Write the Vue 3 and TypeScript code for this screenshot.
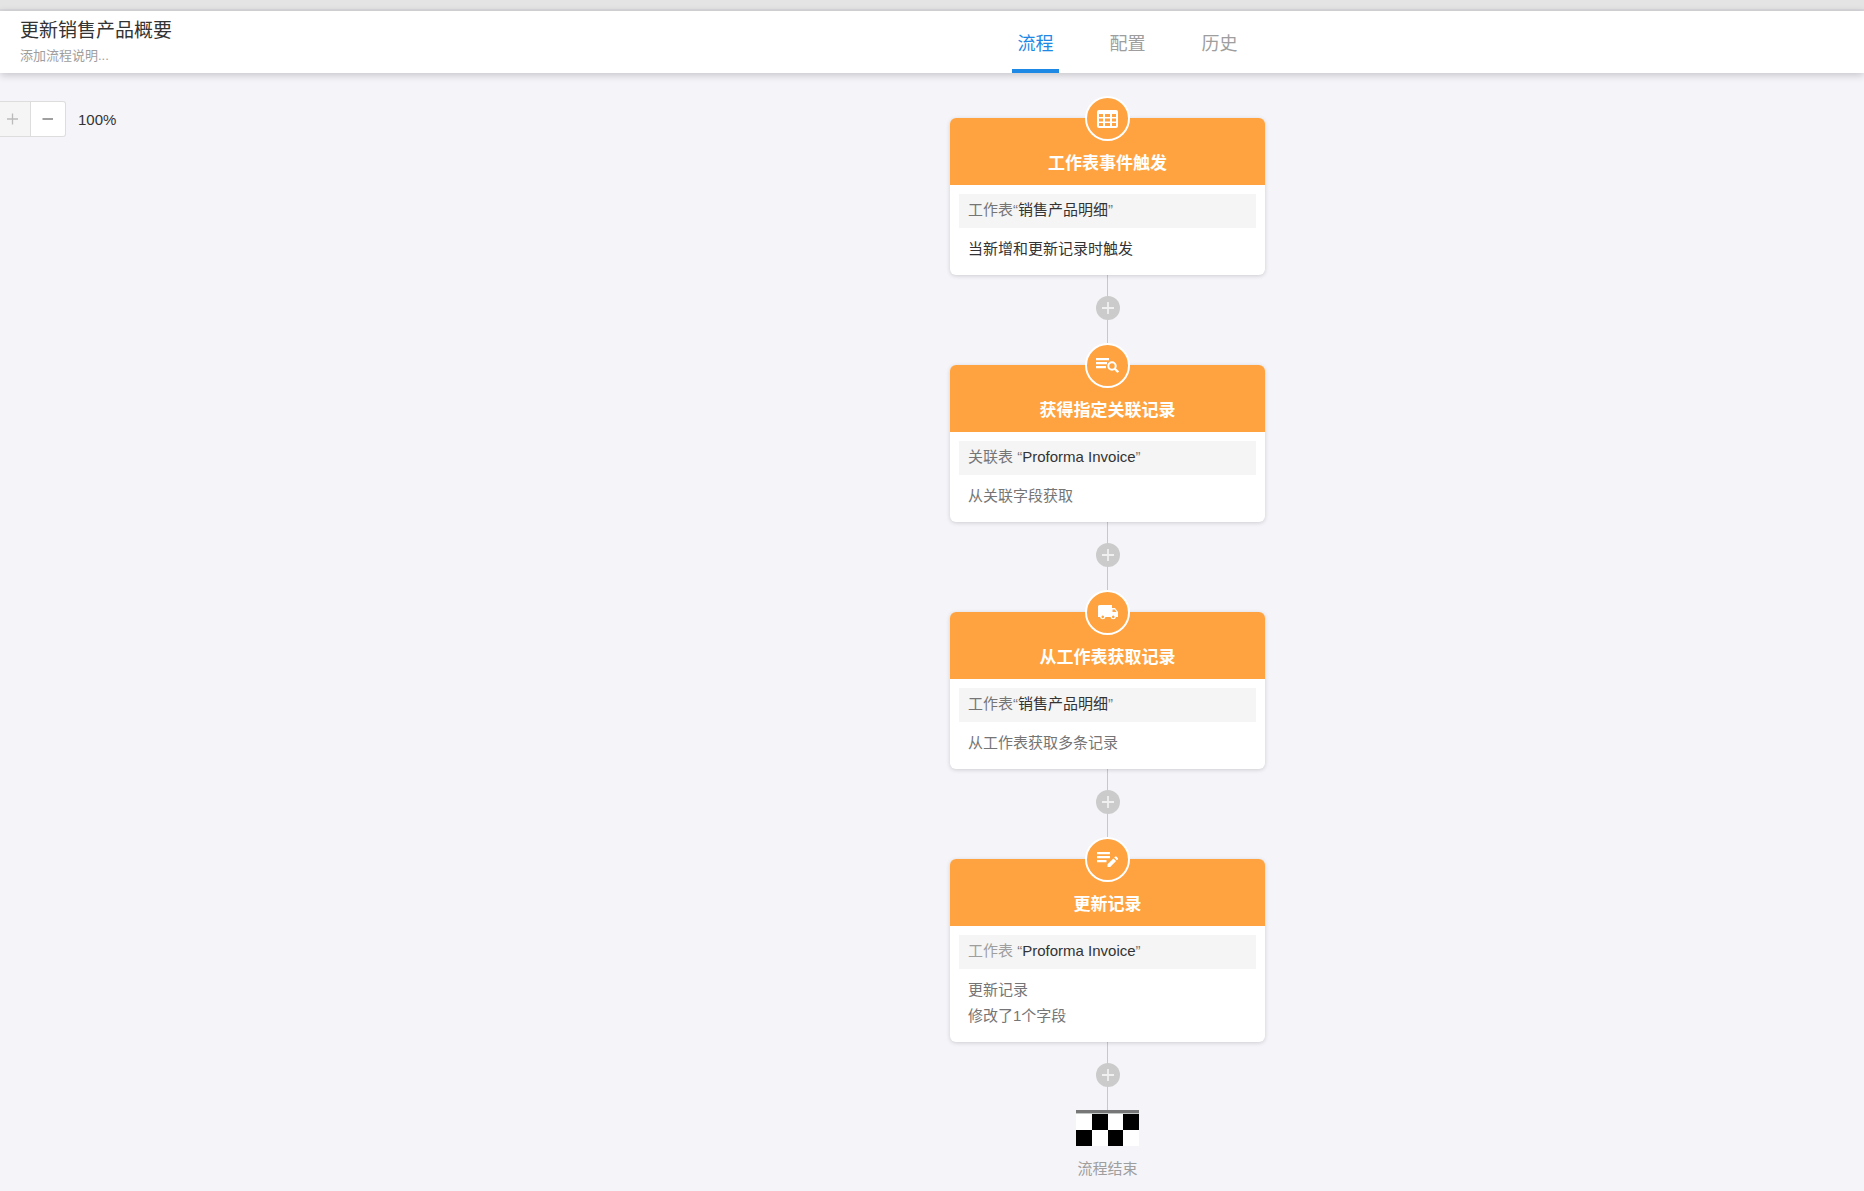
<script setup lang="ts">
import { ref } from 'vue'

type Icon = 'sheet' | 'search' | 'truck' | 'edit'

interface FlowNode {
  icon: Icon
  title: string
  label: string
  target: string
  spaced: boolean
  tone: 'mid' | 'light'
  lines: string[]
  dark?: boolean
}

const tabs = ['流程', '配置', '历史']
const active = ref(0)
const zoom = ref(100)

const nodes: FlowNode[] = [
  { icon: 'sheet', title: '工作表事件触发', label: '工作表', target: '销售产品明细', spaced: false, tone: 'mid', lines: ['当新增和更新记录时触发'], dark: true },
  { icon: 'search', title: '获得指定关联记录', label: '关联表', target: 'Proforma Invoice', spaced: true, tone: 'mid', lines: ['从关联字段获取'] },
  { icon: 'truck', title: '从工作表获取记录', label: '工作表', target: '销售产品明细', spaced: false, tone: 'mid', lines: ['从工作表获取多条记录'] },
  { icon: 'edit', title: '更新记录', label: '工作表', target: 'Proforma Invoice', spaced: true, tone: 'light', lines: ['更新记录', '修改了1个字段'] },
]
</script>

<template>
  <div class="page">
    <div class="strip"></div>
    <header class="header">
      <div class="heading">
        <h1>更新销售产品概要</h1>
        <button type="button" class="describe">添加流程说明...</button>
      </div>
      <nav class="tabs">
        <a
          v-for="(tab, i) in tabs"
          :key="tab"
          href="#"
          :class="{ active: i === active }"
          @click.prevent="active = i"
        >{{ tab }}</a>
      </nav>
    </header>

    <main class="canvas">
      <div class="zoom">
        <button type="button" class="plus" aria-label="放大" :disabled="zoom >= 100" @click="zoom += 10">
          <svg width="12" height="12" viewBox="0 0 12 12"><path d="M5.5 0.5v11M0 6h11" stroke="#bbb" stroke-width="1.3" fill="none" /></svg>
        </button>
        <button type="button" class="minus" aria-label="缩小" @click="zoom -= 10">
          <svg width="12" height="12" viewBox="0 0 12 12"><path d="M0.5 6h10.5" stroke="#777" stroke-width="1.4" fill="none" /></svg>
        </button>
        <span>{{ zoom }}%</span>
      </div>

      <div class="flow">
        <template v-for="(node, i) in nodes" :key="i">
          <section class="card">
            <span class="badge">
              <svg v-if="node.icon === 'sheet'" width="21" height="18" viewBox="0 0 21 18">
                <path fill="#fff" fill-rule="evenodd" d="M2 0h17a2 2 0 0 1 2 2v14a2 2 0 0 1-2 2H2a2 2 0 0 1-2-2V2a2 2 0 0 1 2-2zM2 4v3h4V4zM8 4v3h5V4zM15 4v3h4V4zM2 8.500v3h4v-3zM8 8.500v3h5v-3zM15 8.500v3h4v-3zM2 13v3h4v-3zM8 13v3h5v-3zM15 13v3h4v-3z" />
              </svg>
              <svg v-else-if="node.icon === 'search'" width="23" height="17" viewBox="0 0 23 17">
                <path d="M0 2.200h13M0 6.200h11M0 10.200h10" stroke="#fff" stroke-width="2.200" fill="none" />
                <circle cx="16" cy="9" r="3.700" stroke="#fff" stroke-width="2" fill="none" />
                <path d="M18.500 11.500l3.800 3.800" stroke="#fff" stroke-width="2.300" />
              </svg>
              <svg v-else-if="node.icon === 'truck'" width="20" height="15" viewBox="0 0 20 15">
                <path fill="#fff" fill-rule="evenodd" d="M1.500 0H14v3h3l3 4v5h-2a2.800 2.800 0 0 1-5.500 0H7.500A2.800 2.800 0 0 1 2 12H0V1.500A1.500 1.500 0 0 1 1.500 0zM14.500 4.500V7h4l-1.800-2.500zM4.750 10.600a1.300 1.300 0 1 0 0.010 0zM15.250 10.600a1.300 1.300 0 1 0 0.010 0z" />
              </svg>
              <svg v-else width="21" height="17" viewBox="0 0 21 17">
                <path d="M0 2.200h13M0 6.200h13M0 10.200h9.500" stroke="#fff" stroke-width="2.200" fill="none" />
                <path fill="#fff" d="M10.500 16v-2.700l5.900-5.900 2.700 2.700-5.900 5.900zM17.200 6.600l1.100-1.100q.5-.4 1 0l1.700 1.700q.4.500 0 1l-1.100 1.100z" />
              </svg>
            </span>
            <h2>{{ node.title }}</h2>
            <div class="body">
              <p class="target"><span :class="node.tone">{{ node.label }}<template v-if="node.spaced">&nbsp;</template></span><span class="quote">“</span>{{ node.target }}<span class="quote">”</span></p>
              <div class="lines" :class="{ dark: node.dark }">
                <p v-for="line in node.lines" :key="line">{{ line }}</p>
              </div>
            </div>
          </section>
          <div class="link" :class="{ last: i === nodes.length - 1 }">
            <button type="button" aria-label="添加节点">
              <svg width="24" height="24" viewBox="0 0 24 24">
                <circle cx="12" cy="12" r="12" fill="#cbcbcb" />
                <path d="M12 6v12M6 12h12" stroke="#f0f0f0" stroke-width="1.800" />
              </svg>
            </button>
          </div>
        </template>
        <svg class="finish" width="63" height="36" viewBox="0 0 63 36" shape-rendering="crispEdges">
          <rect width="63" height="36" fill="#fff" />
          <rect width="63" height="3" fill="#777" />
          <rect y="3" width="63" height="1" fill="#c4c8c4" />
          <path d="M16 4h16v16H16zM47 4h16v16H47zM0 20h16v16H0zM32 20h15v16H32z" fill="#000" />
        </svg>
        <p class="end">流程结束</p>
      </div>
    </main>
  </div>
</template>

<style>
body {
  background: #f4f4f9;
}
</style>

<style scoped>
.page {
  min-height: 100vh;
  overflow: hidden;
  box-sizing: border-box;
  background: #f4f4f9;
  color: #333;
  font-family: "Liberation Sans", "Noto Sans CJK SC", sans-serif;
  font-size: 15px;
}
h1, h2, p {
  margin: 0;
}
button {
  font: inherit;
  padding: 0;
  border: 0;
  background: none;
}
.strip {
  height: 9px;
  background: #e4e4e4;
  border-bottom: 2px solid #dadade;
}
.header {
  position: relative;
  display: flex;
  height: 62px;
  background: #fff;
  box-shadow: 0 2px 8px rgba(0, 0, 0, 0.2);
}
.heading {
  position: absolute;
  top: 6px;
  left: 20px;
  display: flex;
  flex-direction: column;
  align-items: flex-start;
}
h1 {
  font-size: 19px;
  line-height: 28px;
  font-weight: 400;
}
.describe {
  font-size: 13px;
  line-height: 22px;
  color: #9e9e9e;
}
.tabs {
  flex: 1;
  display: flex;
  justify-content: center;
  gap: 45px;
  padding-left: 391px;
}
.tabs a {
  box-sizing: border-box;
  width: 47px;
  padding-top: 6px;
  border-bottom: 4px solid transparent;
  font-size: 18px;
  line-height: 54px;
  height: 62px;
  text-align: center;
  text-decoration: none;
  color: #9e9e9e;
}
.tabs a.active {
  color: #1e88e5;
  border-color: #1e88e5;
}
.canvas {
  padding: 45px 0 10px 351px;
}
.zoom {
  position: absolute;
  left: 0;
  top: 101px;
  display: flex;
  align-items: center;
}
.zoom button {
  box-sizing: border-box;
  display: flex;
  align-items: center;
  height: 36px;
  border: 1px solid #ddd;
}
.zoom .plus {
  width: 31px;
  padding-left: 7px;
  border-width: 1px 1px 1px 0;
  background: #f5f5f5;
}
.zoom .minus {
  width: 35px;
  justify-content: center;
  border-left: 0;
  border-radius: 0 3px 3px 0;
  background: #fff;
}
.zoom span {
  margin-left: 12px;
}
.flow {
  display: flex;
  flex-direction: column;
  align-items: center;
}
.card {
  position: relative;
  width: 315px;
  border-radius: 6px;
  background: #fff;
  box-shadow: 0 1px 4px rgba(0, 0, 0, 0.16);
}
.badge {
  position: absolute;
  top: -22px;
  left: 135px;
  box-sizing: border-box;
  display: flex;
  align-items: center;
  justify-content: center;
  width: 45px;
  height: 45px;
  border: 2px solid #fff;
  border-radius: 50%;
  background: #ffa340;
}
h2 {
  padding: 34px 0 9px;
  border-radius: 6px 6px 0 0;
  background: #ffa340;
  color: #fff;
  font-size: 17px;
  line-height: 24px;
  font-weight: 700;
  text-align: center;
}
.body {
  padding: 9px 9px 13px;
}
.target {
  padding: 0 9px 2px;
  line-height: 32px;
  background: #f5f5f5;
}
.mid, .quote {
  color: #757575;
}
.light {
  color: #9e9e9e;
}
.lines {
  padding: 8px 9px 0;
  line-height: 26px;
  color: #757575;
}
.lines.dark {
  color: #333;
}
.link {
  display: flex;
  justify-content: center;
  width: 24px;
  height: 69px;
  padding-top: 21px;
  background: linear-gradient(#c8c8cc, #c8c8cc) center / 1px 100% no-repeat;
}
.link.last {
  height: 47px;
}
.link button {
  width: 24px;
  height: 24px;
}
.link svg, .finish {
  display: block;
}
.end {
  margin-top: 10px;
  line-height: 26px;
  color: #9e9e9e;
}
</style>
